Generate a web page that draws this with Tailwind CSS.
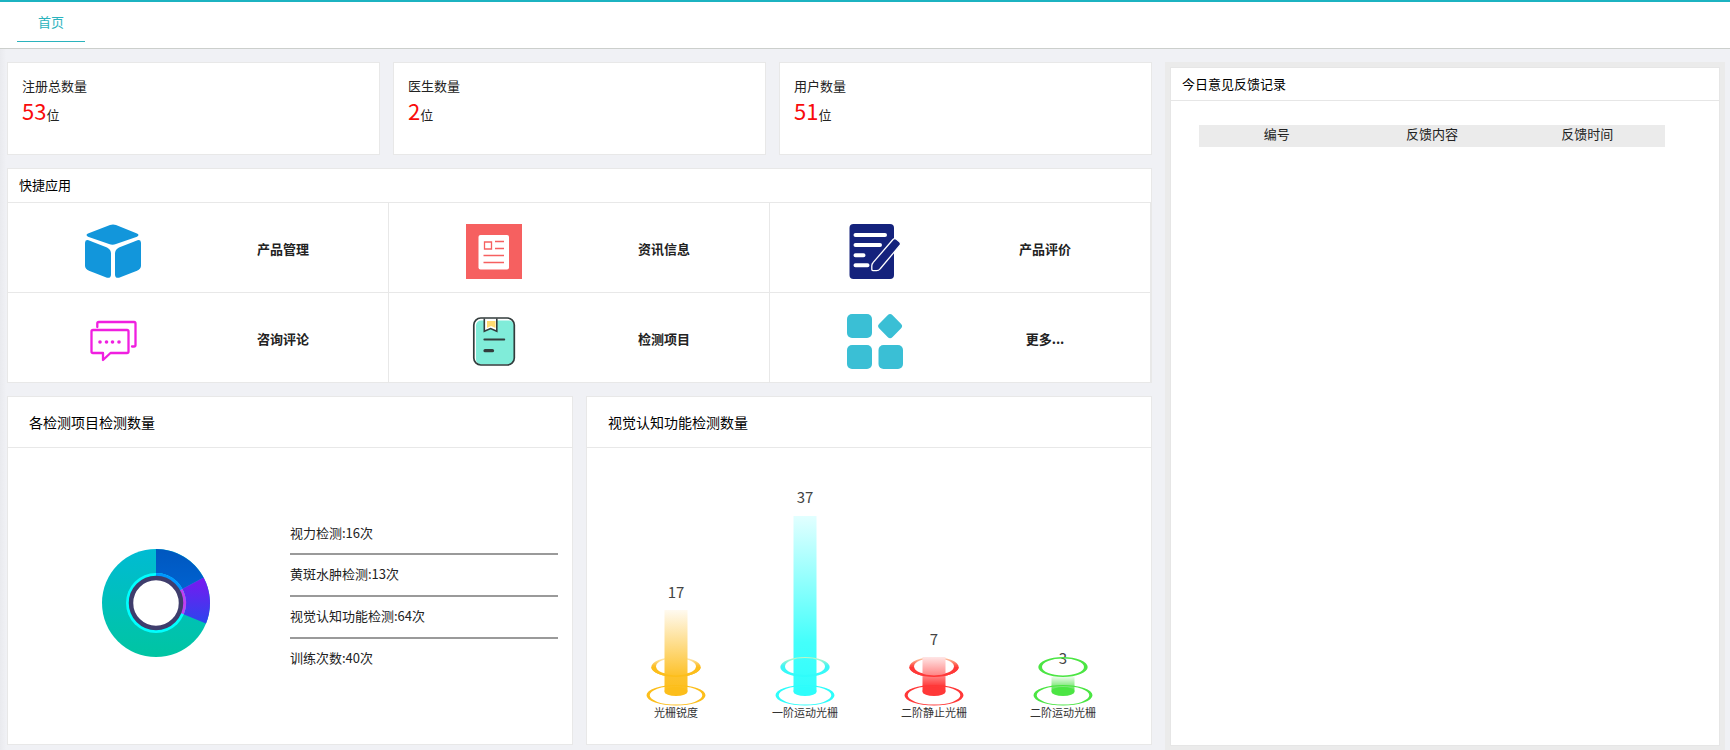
<!DOCTYPE html>
<html lang="zh-CN">
<head>
<meta charset="utf-8">
<title>首页</title>
<script src="https://cdn.jsdelivr.net/npm/@tailwindcss/browser@4"></script>
</head>
<body class="flex h-screen flex-col overflow-hidden bg-[#f0f1f5] font-['Noto_Sans_CJK_SC',sans-serif] text-[13px] leading-5 text-[#222]">

<header class="flex h-[49px] shrink-0 border-t-2 border-b border-t-[#1cb3c1] border-b-[#cccfcc] bg-white px-[17px]">
  <nav class="flex h-10 border-b border-[#2bb3bd]">
    <a href="#" class="flex items-center px-[21px] text-[#2bb3bd]">首页</a>
  </nav>
</header>

<main class="grid min-h-0 flex-1 grid-cols-[1145fr_560fr] gap-[13px] bg-[linear-gradient(to_right,#e9eaee,#f0f1f5_6px)] pt-[13px] pr-[5px] pl-[7px]">
  <div class="flex min-h-0 min-w-0 flex-col gap-[13px] pb-[5px]">

    <section class="grid h-[93px] shrink-0 grid-cols-3 gap-[13px]">
      <div class="border border-[#e8e8e8] bg-white px-[14px] pt-[13px]">
        <h2>注册总数量</h2>
        <p class="leading-7"><span class="text-[22px] text-[#f90b0b]">53</span>位</p>
      </div>
      <div class="border border-[#e8e8e8] bg-white px-[14px] pt-[13px]">
        <h2>医生数量</h2>
        <p class="leading-7"><span class="text-[22px] text-[#f90b0b]">2</span>位</p>
      </div>
      <div class="border border-[#e8e8e8] bg-white px-[14px] pt-[13px]">
        <h2>用户数量</h2>
        <p class="leading-7"><span class="text-[22px] text-[#f90b0b]">51</span>位</p>
      </div>
    </section>

    <section class="shrink-0 border border-[#e8e8e8] bg-white">
      <h2 class="flex h-[34px] items-center border-b border-[#e8e8e8] px-[11px] pb-[2px] text-black">快捷应用</h2>
      <div class="grid grid-cols-3 font-bold">
        <a href="#" class="grid h-[90px] grid-cols-[21fr_13fr] items-center justify-items-center border-r border-b border-[#e8e8e8] pt-0.5 pr-10">
          <svg class="mt-1.5 h-[55px] w-14" viewBox="0 0 56 55" fill="#1296db"><path d="M25 1q3-1.200 6 0L52 9.500q3 1.500 0 3.200L31 20q-3.500 1.500-7 0L3 12.700q-3-1.700 0-3.200z"/><path d="M0 18.500q.3-3 3.500-2.300L22 23.500q4 2 4 6V51q-.5 3.500-4 2.700L4 46.800Q0 45 0 41.500z"/><path d="M56 18.500q-.3-3-3.500-2.300L34 23.500q-4 2-4 6V51q.5 3.500 4 2.700l18-6.900q4-1.800 4-5.300z"/></svg>
          <span>产品管理</span>
        </a>
        <a href="#" class="grid h-[90px] grid-cols-[21fr_13fr] items-center justify-items-center border-r border-b border-[#e8e8e8] pt-0.5 pr-10">
          <svg class="mt-1.5 h-[55px] w-14" viewBox="0 0 56 55"><path fill="#f66060" d="M0 0h56v55H0z"/><rect x="12.500" y="11" width="30.500" height="34.500" rx="2" fill="#fff"/><g fill="none" stroke="#f66060" stroke-width="1.300"><path d="M18.500 18h7v7h-7zM29 17.500h9M29 24.500h9M17.500 31.500H38M17.500 38.500H38"/></g></svg>
          <span>资讯信息</span>
        </a>
        <a href="#" class="grid h-[90px] grid-cols-[21fr_13fr] items-center justify-items-center border-r border-b border-[#e8e8e8] pt-0.5 pr-10">
          <svg class="mt-1.5 h-[55px] w-14" viewBox="0 0 56 55"><rect x="2.500" width="44.500" height="55" rx="4" fill="#14227c"/><path stroke="#fff" stroke-width="4" stroke-linecap="round" d="M8.500 11H38M8.500 21H33M8.500 31.300h8M8.500 41.300h12"/><path fill="#14227c" stroke="#fff" stroke-width="1.300" stroke-linejoin="round" d="M46 15.500q1.500-1.500 3.500-.3l3 2.500q1.700 1.800.5 3.500L33 45q-1.200 1.700-3.500 1.700H26q-1.300-.2-1.200-1.500v-3.500q0-1.700 1.200-3z"/></svg>
          <span>产品评价</span>
        </a>
        <a href="#" class="grid h-[89px] grid-cols-[21fr_13fr] items-center justify-items-center border-r border-[#e8e8e8] pt-0.5 pr-10">
          <svg class="mt-1.5 h-[55px] w-14" viewBox="0 0 56 55"><g fill="none" stroke="#f01fe0" stroke-width="2.300" stroke-linecap="round" stroke-linejoin="round"><path d="M12.300 13V9.500q0-1.500 1.500-1.500H49q1.500 0 1.500 1.500V31q0 1.500-1.500 1.500h-2"/><path d="M8 16h34q1.500 0 1.500 1.500v20q0 1.500-1.500 1.500H25.500L18 46v-7H8q-1.500 0-1.500-1.500v-20Q6.500 16 8 16z"/></g><g fill="#f01fe0"><circle cx="15" cy="28" r="1.800"/><circle cx="21.500" cy="28" r="1.800"/><circle cx="27.500" cy="28" r="1.800"/><circle cx="34" cy="28" r="1.800"/></g></svg>
          <span>咨询评论</span>
        </a>
        <a href="#" class="grid h-[89px] grid-cols-[21fr_13fr] items-center justify-items-center border-r border-[#e8e8e8] pt-0.5 pr-10">
          <svg class="mt-1.5 h-[55px] w-14" viewBox="0 0 56 55"><rect x="10" y="6.500" width="38" height="44" rx="5" fill="#80ecd9"/><rect x="7.800" y="4" width="40.500" height="47" rx="7" fill="none" stroke="#333d3d" stroke-width="1.700"/><path fill="#fff" d="M18.300 5h12.500v12l-6.200-2.600-6.300 2.600z"/><path fill="#ffdc72" d="M21 7h8.500v7l-4.500-2-4 2z"/><path fill="none" stroke="#333d3d" stroke-width="1.600" d="M18.300 4.500v12.700l6.300-2.700 6.200 2.700V4.500"/><path stroke="#333d3d" stroke-width="1.800" stroke-linecap="round" d="M18.300 25.500h20"/><path stroke="#333d3d" stroke-width="3.200" stroke-linecap="round" d="M19 36.700h7.500"/></svg>
          <span>检测项目</span>
        </a>
        <a href="#" class="grid h-[89px] grid-cols-[21fr_13fr] items-center justify-items-center border-r border-[#e8e8e8] pt-0.5 pr-10">
          <svg class="mt-1.5 h-[55px] w-14" viewBox="0 0 56 55" fill="#3abfd5"><rect width="25" height="24" rx="5"/><rect y="31" width="25" height="24" rx="5"/><rect x="31.500" y="31" width="24.500" height="24" rx="5"/><rect x="33.700" y="2.700" width="18.800" height="18.800" rx="3.500" transform="rotate(45 43.100 12.100)"/></svg>
          <span>更多...</span>
        </a>
      </div>
    </section>

    <section class="grid min-h-0 flex-1 grid-cols-2 gap-[13px]">
      <div class="flex flex-col border border-[#e8e8e8] bg-white">
        <h2 class="flex h-[51px] items-center border-b border-[#e8e8e8] px-[21px] pb-px text-sm text-black">各检测项目检测数量</h2>
        <div class="flex flex-1 items-center pt-[14px]">
          <div class="flex flex-1 justify-center pl-[14px]">
            <svg class="size-[108px]" viewBox="-54 -54 108 108">
              <defs>
                <linearGradient id="teal" gradientUnits="userSpaceOnUse" x1="0" y1="-54" x2="0" y2="54"><stop stop-color="#00bbd3"/><stop offset="1" stop-color="#00c5a2"/></linearGradient>
                <linearGradient id="blue" x1="0" y1="0" x2="0" y2="1"><stop stop-color="#0057bf"/><stop offset="1" stop-color="#0066d6"/></linearGradient>
                <linearGradient id="purple" x1="0" y1="0" x2="0" y2="1"><stop stop-color="#7a18f0"/><stop offset="1" stop-color="#2b45ee"/></linearGradient>
              </defs>
              <circle r="54" fill="url(#teal)"/>
              <path fill="url(#blue)" d="M0 0V-54A54 54 0 0 1 47.600-25.400z"/>
              <path fill="url(#purple)" d="M0 0 47.600-25.400A54 54 0 0 1 50 20.400z"/>
              <circle r="30" fill="#0ff"/>
              <path fill="#0096ff" d="M0 0V-30A30 30 0 0 1 26.500-14.100z"/>
              <path fill="#c040f0" d="M0 0 26.500-14.100A30 30 0 0 1 27.800 11.300z"/>
              <circle r="25" fill="#fff" stroke="#3f3d6c" stroke-width="4.500"/>
            </svg>
          </div>
          <ul class="mr-[14px] mb-4 w-[268px]">
            <li class="h-8 border-b-2 border-b-[#9a9a9a]">视力检测:16次</li>
            <li class="h-[42px] border-b-2 border-b-[#9a9a9a] pt-[9px]">黄斑水肿检测:13次</li>
            <li class="h-[42px] border-b-2 border-b-[#9a9a9a] pt-[9px]">视觉认知功能检测:64次</li>
            <li class="pt-[9px]">训练次数:40次</li>
          </ul>
        </div>
      </div>

      <div class="flex flex-col border border-[#e8e8e8] bg-white">
        <h2 class="flex h-[51px] items-center border-b border-[#e8e8e8] px-[21px] pb-px text-sm text-black">视觉认知功能检测数量</h2>
        <div class="grid flex-1 grid-cols-4 justify-items-center px-6">
          <svg class="h-[290px] w-32" viewBox="0 0 128 290">
            <defs>
              <linearGradient id="b1" x1="0" y1="0" x2="0" y2="1"><stop stop-color="#fffaf0"/><stop offset=".75" stop-color="#fdc32f"/><stop offset="1" stop-color="#fcbe1b"/></linearGradient>
              <linearGradient id="r1" x1="0" y1="0" x2="0" y2="1"><stop stop-color="#fdf0cc"/><stop offset=".45" stop-color="#fcbe2a"/><stop offset="1" stop-color="#fcbe1b"/></linearGradient>
            </defs>
            <path fill="url(#r1)" fill-rule="evenodd" d="M39.300 219a24.700 10 0 0 1 49.400 0a24.700 10 0 0 1-49.400 0zM44 218.500a20 8.500 0 0 0 40 0a20 8.500 0 0 0-40 0z"/>
            <path fill="url(#b1)" d="M52.500 162h23v82a11.500 4 0 0 1-23 0z"/>
            <ellipse cx="64" cy="243" rx="11.500" ry="4" fill="#fcbe1b"/>
            <path fill="#fcbe1b" d="M39.300 219a24.700 10 0 0 0 49.400 0h-4.700a20 8.500 0 0 1-40 0z"/>
            <path fill="#fcbe1b" fill-rule="evenodd" d="M34.500 247.300a29.500 10.300 0 0 1 59 0a29.500 10.300 0 0 1-59 0zM37.700 247.300a26.300 9.300 0 0 0 52.600 0a26.300 9.300 0 0 0-52.600 0z"/>
            <text x="64" y="150" text-anchor="middle" class="fill-[#444] text-[15px]">17</text>
            <text x="64" y="269" text-anchor="middle" class="fill-[#333] text-[11px]">光栅锐度</text>
          </svg>
          <svg class="h-[290px] w-32" viewBox="0 0 128 290">
            <defs>
              <linearGradient id="b2" x1="0" y1="0" x2="0" y2="1"><stop stop-color="#e2ffff"/><stop offset=".7" stop-color="#44fffb"/><stop offset="1" stop-color="#2efdfb"/></linearGradient>
              <linearGradient id="r2" x1="0" y1="0" x2="0" y2="1"><stop stop-color="#c8f5c0"/><stop offset=".45" stop-color="#40f5f5"/><stop offset="1" stop-color="#2efdfb"/></linearGradient>
            </defs>
            <path fill="url(#b2)" d="M52.500 68h23v176a11.500 4 0 0 1-23 0z"/>
            <ellipse cx="64" cy="243" rx="11.500" ry="4" fill="#2efdfb"/>
            <path fill="url(#r2)" fill-rule="evenodd" d="M39.300 219a24.700 10 0 0 1 49.400 0a24.700 10 0 0 1-49.400 0zM44 218.500a20 8.500 0 0 0 40 0a20 8.500 0 0 0-40 0z"/>
            <path fill="#2efdfb" fill-rule="evenodd" d="M34.500 247.300a29.500 10.300 0 0 1 59 0a29.500 10.300 0 0 1-59 0zM37.700 247.300a26.300 9.300 0 0 0 52.600 0a26.300 9.300 0 0 0-52.600 0z"/>
            <text x="64" y="55" text-anchor="middle" class="fill-[#444] text-[15px]">37</text>
            <text x="64" y="269" text-anchor="middle" class="fill-[#333] text-[11px]">一阶运动光栅</text>
          </svg>
          <svg class="h-[290px] w-32" viewBox="0 0 128 290">
            <defs>
              <linearGradient id="b3" x1="0" y1="0" x2="0" y2="1"><stop stop-color="#ffe6e6"/><stop offset=".5" stop-color="#ff8080"/><stop offset=".75" stop-color="#ff3a3a"/><stop offset="1" stop-color="#ff3838"/></linearGradient>
              <linearGradient id="r3" x1="0" y1="0" x2="0" y2="1"><stop stop-color="#fddcb0"/><stop offset=".45" stop-color="#ff4a42"/><stop offset="1" stop-color="#ff3838"/></linearGradient>
            </defs>
            <path fill="url(#r3)" fill-rule="evenodd" d="M39.300 219a24.700 10 0 0 1 49.400 0a24.700 10 0 0 1-49.400 0zM44 218.500a20 8.500 0 0 0 40 0a20 8.500 0 0 0-40 0z"/>
            <path fill="url(#b3)" d="M52.500 209h23v35a11.500 4 0 0 1-23 0z"/>
            <ellipse cx="64" cy="243" rx="11.500" ry="4" fill="#ff3838"/>
            <path fill="#ff3838" d="M39.300 219a24.700 10 0 0 0 49.400 0h-4.700a20 8.500 0 0 1-40 0z"/>
            <path fill="#ff3838" fill-rule="evenodd" d="M34.500 247.300a29.500 10.300 0 0 1 59 0a29.500 10.300 0 0 1-59 0zM37.700 247.300a26.300 9.300 0 0 0 52.600 0a26.300 9.300 0 0 0-52.600 0z"/>
            <text x="64" y="197" text-anchor="middle" class="fill-[#444] text-[15px]">7</text>
            <text x="64" y="269" text-anchor="middle" class="fill-[#333] text-[11px]">二阶静止光栅</text>
          </svg>
          <svg class="h-[290px] w-32" viewBox="0 0 128 290">
            <defs>
              <linearGradient id="b4" x1="0" y1="0" x2="0" y2="1"><stop stop-color="#f4fdf4"/><stop offset=".65" stop-color="#62e35c"/><stop offset="1" stop-color="#4be543"/></linearGradient>
            </defs>
            <path fill="url(#b4)" d="M52.500 228h23v16a11.500 4 0 0 1-23 0z"/>
            <ellipse cx="64" cy="243" rx="11.500" ry="4" fill="#4be543"/>
            <text x="64" y="216" text-anchor="middle" class="fill-[#444] text-[15px]">3</text>
            <path fill="#4be543" fill-rule="evenodd" d="M39.300 219a24.700 10 0 0 1 49.400 0a24.700 10 0 0 1-49.400 0zM43 219a21 8.500 0 0 0 42 0a21 8.500 0 0 0-42 0z"/>
            <path fill="#4be543" fill-rule="evenodd" d="M34.500 247.300a29.500 10.300 0 0 1 59 0a29.500 10.300 0 0 1-59 0zM37.700 247.300a26.300 9.300 0 0 0 52.600 0a26.300 9.300 0 0 0-52.600 0z"/>
            <text x="64" y="269" text-anchor="middle" class="fill-[#333] text-[11px]">二阶运动光栅</text>
          </svg>
        </div>
      </div>
    </section>
  </div>

  <aside class="flex min-w-0 flex-col bg-[#ebebeb] px-[5px] pt-[5px] pb-1">
    <section class="flex-1 border border-[#e6e6e6] bg-white">
      <h2 class="flex h-[33px] items-center border-b border-[#e6e6e6] px-[11px] pb-px text-black">今日意见反馈记录</h2>
      <table class="mt-6 ml-7 w-[85%] table-fixed bg-[#ebebeb]">
        <thead>
          <tr class="h-[22px]">
            <th class="pb-1 leading-[18px] font-normal" scope="col">编号</th>
            <th class="pb-1 leading-[18px] font-normal" scope="col">反馈内容</th>
            <th class="pb-1 leading-[18px] font-normal" scope="col">反馈时间</th>
          </tr>
        </thead>
      </table>
    </section>
  </aside>
</main>
</body>
</html>
